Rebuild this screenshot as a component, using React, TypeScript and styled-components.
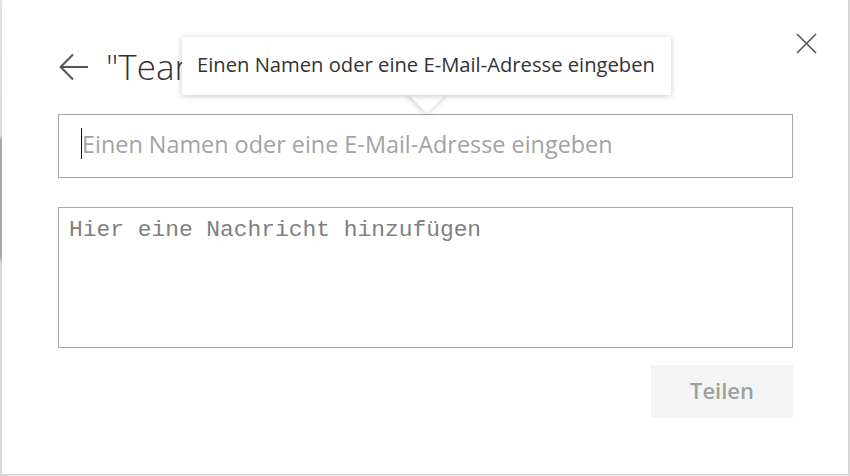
import React from "react";
import styled, { createGlobalStyle } from "styled-components";

const Global = createGlobalStyle`
  html, body { margin: 0; padding: 0; background: #ffffff; }
  body { font-family: "Open Sans", "Noto Sans", sans-serif; }
  * { box-sizing: border-box; }
`;

const Page = styled.div`
  display: flex;
  width: 850px;
  height: 476px;
  overflow: hidden;
  background: #e4e4e4;
`;

const Backdrop = styled.div`
  width: 2px;
  flex: none;
  background: linear-gradient(
    to bottom,
    #e2e2e2 0px,
    #dcdcdc 135px,
    #a9a9a9 140px,
    #a9a9a9 258px,
    #d6d6d6 262px,
    #d9d9d9 476px
  );
`;

const Dialog = styled.div`
  flex: none;
  width: 847px;
  height: 475px;
  background: #ffffff;
  border-right: 1px solid #cfcfcf;
  border-bottom: 1px solid #cfcfcf;
  padding: 0 55px 0 56px;
  display: flex;
  flex-direction: column;
`;

const Header = styled.div`
  display: flex;
  justify-content: space-between;
  align-items: flex-start;
  height: 114px;
  margin-right: -24px;
`;

const TitleRow = styled.div`
  display: flex;
  align-items: center;
  gap: 16px;
  margin-top: 43px;
  white-space: nowrap;
`;

const BackButton = styled.button`
  border: 0;
  background: transparent;
  padding: 0;
  width: 32px;
  height: 30px;
  display: flex;
  align-items: center;
  justify-content: center;
  color: #555555;
`;

const Title = styled.h1`
  margin: 0;
  font-family: "Open Sans", "Noto Sans", sans-serif;
  font-weight: 300;
  font-size: 35px;
  line-height: 48px;
  color: #333333;
`;

const CloseButton = styled.button`
  border: 0;
  background: transparent;
  padding: 0;
  margin-top: 33px;
  width: 21px;
  height: 21px;
  display: flex;
  align-items: center;
  justify-content: center;
  color: #555555;
`;

const Field = styled.div`
  position: relative;
  display: flex;
  align-items: center;
  height: 64px;
  border: 1px solid #a6a6a6;
  padding: 0 0 4px 22px;
  background: #ffffff;
`;

const Caret = styled.span`
  flex: none;
  width: 1px;
  height: 31px;
  margin-bottom: 2px;
  background: #111111;
`;

const NameInput = styled.input`
  flex: 1;
  border: 0;
  outline: none;
  padding: 0;
  background: transparent;
  font-family: "Open Sans", "Noto Sans", sans-serif;
  font-size: 23.4px;
  color: #333333;
  &::placeholder { color: #a3a3a3; }
`;

const Tooltip = styled.div`
  position: absolute;
  left: 123px;
  bottom: calc(100% + 20px);
  width: 489px;
  height: 58px;
  z-index: 2;
`;

const TooltipBox = styled.div`
  position: relative;
  height: 100%;
  background: #ffffff;
  box-shadow: 0 1px 6px rgba(0, 0, 0, 0.22);
  display: flex;
  align-items: center;
  padding: 0 0 4px 15px;
  font-family: "Open Sans", "Noto Sans", sans-serif;
  font-size: 20.2px;
  color: #333333;
  white-space: nowrap;
  z-index: 1;
`;

const Beak = styled.div`
  position: absolute;
  left: 50%;
  bottom: -13px;
  width: 26px;
  height: 26px;
  margin-left: -13px;
  background: #ffffff;
  transform: rotate(45deg);
  box-shadow: 0 1px 6px rgba(0, 0, 0, 0.22);
  z-index: 0;
`;

const MessageArea = styled.textarea`
  margin-top: 29px;
  height: 141px;
  border: 1px solid #a6a6a6;
  padding: 9px 10px;
  resize: none;
  outline: none;
  font-family: "Liberation Mono", "Courier New", monospace;
  font-size: 22.9px;
  line-height: 26px;
  color: #333333;
  &::placeholder { color: #808080; }
`;

const Footer = styled.div`
  display: flex;
  justify-content: flex-end;
  margin-top: 17px;
`;

const ShareButton = styled.button`
  width: 142px;
  height: 53px;
  border: 0;
  background: #f4f4f4;
  color: #a0a0a0;
  font-family: "Open Sans", "Noto Sans", sans-serif;
  font-weight: 600;
  font-size: 22px;
  padding: 0 0 4px 0;
`;

export default function App() {
  return (
    <>
      <Global />
      <Page>
        <Backdrop />
        <Dialog>
          <Header>
            <TitleRow>
              <BackButton aria-label="Zurück">
                <svg width="30" height="28" viewBox="0 0 30 28" fill="none" stroke="currentColor" strokeWidth="2">
                  <path d="M29 14H2" />
                  <path d="M14 1.5L1.6 14L14 26.5" />
                </svg>
              </BackButton>
              <Title>"Team-Website" freigeben</Title>
            </TitleRow>
            <CloseButton aria-label="Schließen">
              <svg width="21" height="21" viewBox="0 0 21 21" fill="none" stroke="currentColor" strokeWidth="1.6">
                <path d="M1 1L20 20" />
                <path d="M20 1L1 20" />
              </svg>
            </CloseButton>
          </Header>
          <Field>
            <Tooltip role="tooltip">
              <Beak />
              <TooltipBox>Einen Namen oder eine E-Mail-Adresse eingeben</TooltipBox>
            </Tooltip>
            <Caret />
            <NameInput placeholder="Einen Namen oder eine E-Mail-Adresse eingeben" />
          </Field>
          <MessageArea placeholder="Hier eine Nachricht hinzufügen" />
          <Footer>
            <ShareButton>Teilen</ShareButton>
          </Footer>
        </Dialog>
      </Page>
    </>
  );
}
